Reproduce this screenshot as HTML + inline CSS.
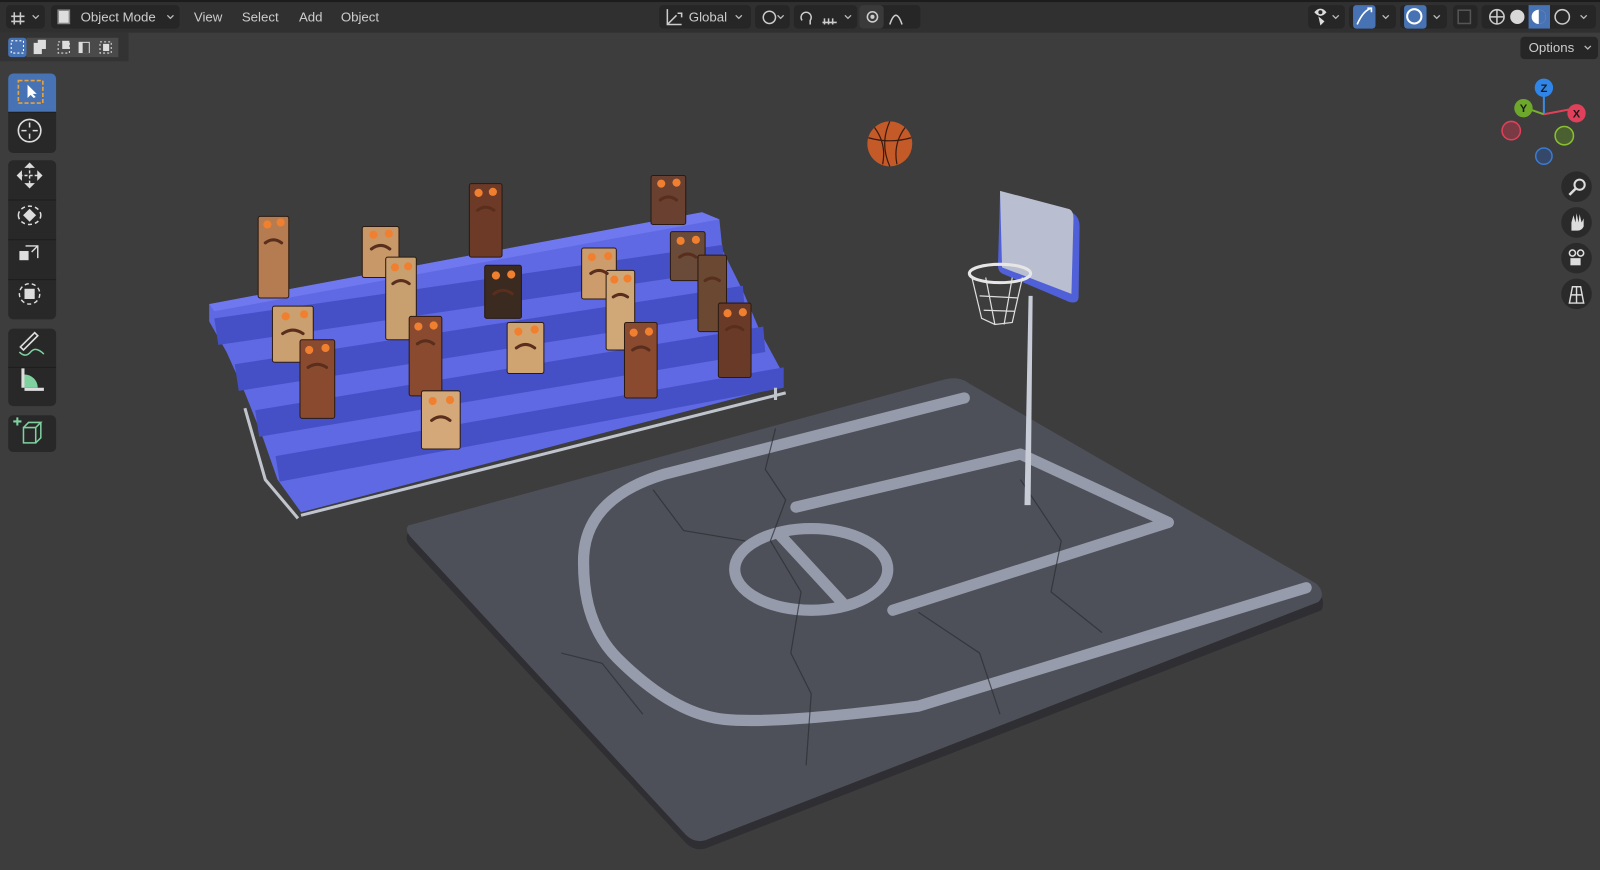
<!DOCTYPE html>
<html><head><meta charset="utf-8"><style>
html,body{margin:0;padding:0;background:#3d3d3d;overflow:hidden}
svg{display:block}
text{font-family:"Liberation Sans",sans-serif}
</style></head><body>
<svg width="1600" height="870" viewBox="0 0 1568 852.6" xmlns="http://www.w3.org/2000/svg">
<rect width="1568" height="853" fill="#3d3d3d"/>
<!-- header -->
<rect width="1568" height="32" fill="#303030"/>
<rect width="1568" height="2" fill="#1c1c1c"/>
<rect x="0" y="32" width="126" height="28" fill="#333"/>
<g fill="#262626">
<rect x="6" y="5" width="38" height="23" rx="4"/>
<rect x="50" y="5" width="126" height="23" rx="4"/>
<rect x="646" y="5" width="90" height="23" rx="4"/>
<rect x="740" y="5" width="34" height="23" rx="4"/>
<rect x="778" y="5" width="62" height="23" rx="4"/>
<rect x="842" y="5" width="60" height="23" rx="4"/>
<rect x="1282" y="5" width="36" height="23" rx="4"/>
<rect x="1322" y="5" width="46" height="23" rx="4"/>
<rect x="1372" y="5" width="46" height="23" rx="4"/>
<rect x="1424" y="5" width="24" height="23" rx="4"/>
<rect x="1452" y="5" width="112" height="23" rx="4"/>
<rect x="1490" y="36" width="76" height="22" rx="4"/>
</g>
<rect x="1326" y="5" width="22" height="23" rx="3" fill="#4772b3"/>
<rect x="1376" y="5" width="22" height="23" rx="3" fill="#4772b3"/>
<rect x="1498" y="5" width="21" height="23" fill="#4772b3"/>
<rect x="842" y="5" width="24" height="23" rx="4" fill="#3a3a3a"/>
<g fill="none" stroke="#ccc" stroke-width="1.5">
<path d="M14 12v12M20 12v12M11 16h13M11 21h13"/>
<rect x="57" y="10" width="11" height="13" fill="#ddd" stroke="#888"/>
<path d="M654 9v15h14M654 24l9-9M664 13h4v4"/>
<circle cx="754" cy="17" r="6"/>
<path d="M786 20a5 5 0 1 1 8 0v4"/>
<path d="M806 22h14M808 18v6M812 18v6M816 18v6"/>
<circle cx="855" cy="16.5" r="5"/>
<path d="M872 24q6-18 12 0"/>
<path d="M1460 16.5a7 7 0 1 0 14 0a7 7 0 1 0 -14 0M1460 16.5h14M1467 9.5v14"/>
<path d="M1524 16.5a7 7 0 1 0 14 0a7 7 0 1 0 -14 0"/>
</g>
<circle cx="855" cy="16.5" r="2" fill="#ccc"/>
<circle cx="1487" cy="16.5" r="7" fill="#d8d8d8"/>
<circle cx="1508" cy="16.5" r="7" fill="#fff"/><path d="M1508 9.5a7 7 0 0 1 0 14z" fill="#4772b3"/>
<circle cx="1386" cy="16" r="7" fill="none" stroke="#fff" stroke-width="2"/>
<path d="M1330 24q6-14 14-16M1340 8h4v4" stroke="#fff" stroke-width="1.6" fill="none"/>
<path d="M1288 12q6-7 12 0q-6 7-12 0z" fill="#ddd"/><circle cx="1294" cy="12" r="2" fill="#262626"/><path d="M1292 16l2 9 4-4z" fill="#ddd"/>
<rect x="1429" y="10" width="12" height="13" fill="none" stroke="#555" stroke-width="1.5"/>
<g fill="#ccc" font-size="13">
<text x="79" y="21">Object Mode</text>
<text x="190" y="21">View</text>
<text x="237" y="21">Select</text>
<text x="293" y="21">Add</text>
<text x="334" y="21">Object</text>
<text x="675" y="21">Global</text>
<text x="1498" y="51">Options</text>
</g>
<g fill="none" stroke="#bbb" stroke-width="1.3">
<path d="M32 15l3 3 3-3M164 15l3 3 3-3M721 15l3 3 3-3M762 15l3 3 3-3M828 15l3 3 3-3M1306 15l3 3 3-3M1355 15l3 3 3-3M1405 15l3 3 3-3M1549 15l3 3 3-3M1553 45l3 3 3-3"/>
</g>
<!-- select modes -->
<rect x="8" y="37" width="18" height="19" rx="3" fill="#4772b3"/>
<rect x="26" y="37" width="90" height="19" fill="#4a4a4a"/>
<rect x="11" y="40" width="12" height="12" fill="none" stroke="#fff" stroke-dasharray="2 2"/>
<g fill="#ddd"><rect x="33" y="42" width="8" height="11"/><rect x="37" y="39" width="8" height="9"/><rect x="57" y="41" width="11" height="11" fill="none" stroke="#ddd" stroke-dasharray="2 2"/><rect x="61" y="40" width="7" height="8"/><rect x="77" y="41" width="11" height="11"/><rect x="81" y="42" width="6" height="10" fill="#4a4a4a"/><rect x="98" y="41" width="11" height="11" fill="none" stroke="#ddd" stroke-dasharray="2 2"/><rect x="101" y="43" width="6" height="7"/></g>
<!-- toolbar -->
<g fill="#282828">
<rect x="8" y="72" width="47" height="78" rx="5"/>
<rect x="8" y="157" width="47" height="156" rx="5"/>
<rect x="8" y="322" width="47" height="76" rx="5"/>
<rect x="8" y="407" width="47" height="36" rx="5"/>
</g>
<path d="M8 110v-33a5 5 0 0 1 5-5h37a5 5 0 0 1 5 5v33z" fill="#4772b3"/>
<g stroke="#1c1c1c"><path d="M8 110h47M8 196h47M8 235h47M8 274h47M8 360h47"/></g>
<rect x="18" y="79" width="24" height="22" fill="none" stroke="#e8a33c" stroke-width="1.6" stroke-dasharray="4 2"/>
<path d="M27 83v13l3-3 3 3 2-1-3-3h4z" fill="#fff"/>
<circle cx="29" cy="128" r="11" fill="none" stroke="#ddd" stroke-width="1.6"/>
<path d="M29 120v5M29 131v5M21 128h5M32 128h5" stroke="#ddd" stroke-width="1.5"/>
<g fill="#ddd" stroke="#ddd">
<path d="M29 162v20M19 172h20" stroke-width="1.4" stroke-dasharray="3 2"/>
<path d="M29 160l-4 4h8zM29 184l-4-4h8zM17 172l4-4v8zM41 172l-4-4v8z"/>
<path d="M18 211a11 9 0 0 1 22 0M18 211a11 9 0 0 0 22 0" fill="none" stroke-width="1.5" stroke-dasharray="4 3"/>
<rect x="25" y="207" width="8" height="8" transform="rotate(45 29 211)"/>
<rect x="19" y="246" width="9" height="9" stroke="none"/>
<path d="M25 241h12v12M31 247l6-6" fill="none" stroke-width="1.4"/>
<rect x="24" y="283" width="10" height="10" stroke="none"/>
<circle cx="29" cy="288" r="10" fill="none" stroke-width="1.4" stroke-dasharray="4 3"/>
<path d="M20 340l14-14 3 3-14 14z" fill="none" stroke-width="1.6"/>
<path d="M21 383v-22h3v22zM21 383h22v-3H21z" stroke="none"/>
<path d="M24 380v-13a13 13 0 0 1 13 13z" fill="#7fd1a0" stroke="none"/>
</g>
<path d="M19 345q6 6 11 0t13 2" fill="none" stroke="#7fd1a0" stroke-width="1.5"/>
<path d="M23 419h12v15H23zM23 419l5-5h12l-5 5M40 414v15l-5 5" fill="none" stroke="#7fd1a0" stroke-width="1.5"/>
<path d="M17 409v8M13 413h8" stroke="#7fd1a0" stroke-width="2"/>
<!-- gizmo -->
<g stroke-width="2"><path d="M1513 112v-24" stroke="#3a8ae0"/><path d="M1513 112l-20-7" stroke="#7ab030"/><path d="M1513 112l32-6" stroke="#e0405a"/></g>
<circle cx="1481" cy="128" r="9" fill="#7a3a44" stroke="#e0405a" stroke-width="1.5"/>
<circle cx="1533" cy="133" r="9" fill="#4a6030" stroke="#8ac030" stroke-width="1.5"/>
<circle cx="1513" cy="153" r="8" fill="#35486a" stroke="#3a7ad0" stroke-width="1.5"/>
<circle cx="1513" cy="86" r="9" fill="#2f86e8"/><circle cx="1493" cy="106" r="9" fill="#6ea82a"/><circle cx="1545" cy="111" r="9" fill="#e0405a"/>
<g font-size="11" font-weight="bold" fill="#1a1a1a" text-anchor="middle"><text x="1513" y="90">Z</text><text x="1493" y="110">Y</text><text x="1545" y="115">X</text></g>
<g fill="#2a2a2a"><circle cx="1545" cy="183" r="15"/><circle cx="1545" cy="218" r="15"/><circle cx="1545" cy="253" r="15"/><circle cx="1545" cy="288" r="15"/></g>
<g fill="#ddd" stroke="#ddd"><circle cx="1548" cy="181" r="5" fill="none" stroke-width="2"/><path d="M1544 185l-6 6" stroke-width="2.5"/>
<path d="M1540 226v-8l2-7 2 7 1-9 2 9 1-8 2 8 2-4v8q-2 4-6 4z" stroke="none"/>
<circle cx="1541" cy="248" r="3" fill="none" stroke-width="1.5"/><circle cx="1549" cy="248" r="3" fill="none" stroke-width="1.5"/><rect x="1539" y="253" width="10" height="7" stroke="none"/>
<path d="M1538 297l3-16h8l3 16zM1539 289h12M1545 281v16" fill="none" stroke-width="1.4"/></g>
<!-- court -->
<path d="M400 522L925 378Q940 374 950 382L1290 578Q1300 588 1295 598L695 830Q682 836 672 826L402 535Q396 528 400 522z" fill="#2e2e33"/>
<path d="M400 515L925 372Q940 368 950 376L1290 572Q1300 582 1292 590L695 822Q682 828 672 818L404 528Q396 520 400 515z" fill="#4d5059"/>
<g fill="none" stroke="#9ea4b4" stroke-width="11" stroke-linecap="round" stroke-linejoin="round" opacity=".9">
<path d="M945 390L650 465Q575 488 572 545Q570 610 605 645Q660 700 710 705Q760 710 900 692L1280 576"/>
<path d="M780 497L1000 445L1145 512L875 598"/>
<ellipse cx="795" cy="558" rx="75" ry="40"/>
<path d="M765 525L825 590"/>
</g>
<g fill="none" stroke="#2a2c30" stroke-width="1.2" opacity=".7"><path d="M760 420l-10 40 20 30-15 40 30 50-10 60 20 40-5 70M640 480l30 40 60 10M900 600l60 40 20 60M1000 470l40 60-10 50 50 40M550 640l40 10 40 50"/></g>
<!-- hoop -->
<path d="M1008 290L1012 290L1010 495L1004 495z" fill="#c8ccd6"/>
<path d="M980 190L1050 208Q1058 212 1058 222L1057 292Q1056 298 1048 296L982 268Q978 266 978 260z" fill="#5060d8"/>
<path d="M980 187L1048 205Q1052 207 1052 214L1050 288L982 262z" fill="#b9bfd0"/>
<path d="M952 270L962 312L975 318L992 316L1002 272M960 290L998 292M964 304L994 305M966 272L975 318M992 272L984 318" fill="none" stroke="#ddd" stroke-width="1.2"/>
<ellipse cx="980" cy="268" rx="30" ry="9" fill="none" stroke="#e6e6e6" stroke-width="3"/>
<!-- ball -->
<circle cx="872" cy="141" r="22" fill="#c45a28"/>
<path d="M851 135q21 6 42 0M872 119q-10 22 0 44M857 125q12 16 8 36M887 125q-12 16-8 36" fill="none" stroke="#3a1a10" stroke-width="1.2"/>
<!-- bleachers -->
<path d="M205 298L688 208L705 215L708 245L728 285L745 325L765 362L768 378L295 502L272 470L258 430L240 385L222 345L205 315z" fill="#5f69e4"/>
<g fill="#4650c6">
<path d="M210 312L708 240L710 265L214 338z"/>
<path d="M230 357L728 280L730 305L234 383z"/>
<path d="M250 402L748 320L750 345L254 428z"/>
<path d="M270 447L768 360L768 380L274 472z"/>
</g>
<path d="M205 298L688 208L705 215L210 305z" fill="#6f78ee"/>
<path d="M295 505L770 385M240 400L260 470L292 508M760 380V392" stroke="#c0c4cc" stroke-width="3" fill="none"/>
<!-- wood figures -->
<g stroke="#2a1a12" stroke-width="1">
<rect x="253" y="212" width="30" height="80" rx="2" fill="#b47c50"/>
<rect x="355" y="222" width="36" height="50" rx="2" fill="#c89868"/>
<rect x="460" y="180" width="32" height="72" rx="2" fill="#6e3a28"/>
<rect x="638" y="172" width="34" height="48" rx="2" fill="#6a4030"/>
<rect x="267" y="300" width="40" height="55" rx="2" fill="#caa070"/>
<rect x="378" y="252" width="30" height="81" rx="2" fill="#c8a070"/>
<rect x="475" y="260" width="36" height="52" rx="2" fill="#3a2a20"/>
<rect x="570" y="243" width="34" height="50" rx="2" fill="#cc9c6c"/>
<rect x="657" y="227" width="34" height="48" rx="2" fill="#6a4a38"/>
<rect x="594" y="265" width="28" height="78" rx="2" fill="#d0a878"/>
<rect x="684" y="250" width="28" height="75" rx="2" fill="#6a4832"/>
<rect x="294" y="333" width="34" height="77" rx="2" fill="#8a4a30"/>
<rect x="401" y="310" width="32" height="78" rx="2" fill="#8a4a30"/>
<rect x="497" y="316" width="36" height="50" rx="2" fill="#d0a470"/>
<rect x="612" y="316" width="32" height="74" rx="2" fill="#8a4a30"/>
<rect x="704" y="297" width="32" height="73" rx="2" fill="#6a3a28"/>
<rect x="413" y="383" width="38" height="57" rx="2" fill="#d4a878"/>
</g>
<g fill="none" stroke="#5a2e1c" stroke-width="3" stroke-linecap="round">
<path d="M260 238q8-6 16 0M364 244q9-7 18 0M468 206q8-6 16 0M647 196q8-6 16 0M277 327q10-7 20 0M385 278q8-6 16 0M484 288q9-7 18 0M579 268q8-6 16 0M666 252q8-6 16 0M601 291q7-5 14 0M691 275q7-5 14 0M302 360q9-6 18 0M409 337q8-6 16 0M506 341q9-7 18 0M620 343q8-6 16 0M712 323q8-6 16 0M423 412q9-7 18 0"/>
</g>
<g fill="#f08030">
<circle cx="262" cy="220" r="4"/><circle cx="275" cy="218" r="4"/>
<circle cx="366" cy="230" r="4"/><circle cx="381" cy="229" r="4"/>
<circle cx="469" cy="189" r="4"/><circle cx="483" cy="188" r="4"/>
<circle cx="648" cy="180" r="4"/><circle cx="663" cy="179" r="4"/>
<circle cx="280" cy="310" r="4"/><circle cx="298" cy="308" r="4"/>
<circle cx="387" cy="262" r="4"/><circle cx="400" cy="261" r="4"/>
<circle cx="486" cy="270" r="4"/><circle cx="501" cy="269" r="4"/>
<circle cx="580" cy="252" r="4"/><circle cx="596" cy="251" r="4"/>
<circle cx="667" cy="236" r="4"/><circle cx="682" cy="235" r="4"/>
<circle cx="602" cy="274" r="4"/><circle cx="615" cy="273" r="4"/>
<circle cx="303" cy="343" r="4"/><circle cx="319" cy="341" r="4"/>
<circle cx="410" cy="320" r="4"/><circle cx="425" cy="319" r="4"/>
<circle cx="508" cy="325" r="4"/><circle cx="524" cy="323" r="4"/>
<circle cx="621" cy="326" r="4"/><circle cx="636" cy="325" r="4"/>
<circle cx="713" cy="307" r="4"/><circle cx="728" cy="306" r="4"/>
<circle cx="424" cy="393" r="4"/><circle cx="441" cy="392" r="4"/>
</g>
</svg>
</body></html>
